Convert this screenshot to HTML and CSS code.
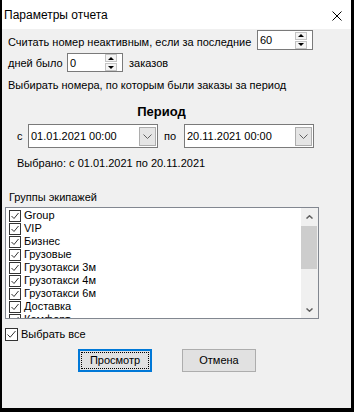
FILE: index.html
```html
<!DOCTYPE html>
<html lang="ru">
<head>
<meta charset="utf-8">
<title>Параметры отчета</title>
<link rel="stylesheet" href="styles.css">
</head>
<body>
<div class="window">
  <div class="titlebar">
    <span class="title">Параметры отчета</span>
    <svg class="close" viewBox="0 0 10 10"><path d="M0.5 0.5 L9.5 9.5 M9.5 0.5 L0.5 9.5" stroke="#000" stroke-width="1" fill="none"/></svg>
  </div>

  <div class="row r1">
    <span class="lbl w1">Считать номер неактивным, если за последние</span>
    <div class="spin"><span class="val">60</span><div class="arrows"><div class="ab"><i class="tri-up"></i></div><div class="ab"><i class="tri-down"></i></div></div></div>
  </div>
  <div class="row r2">
    <span class="lbl w2">дней было</span>
    <div class="spin"><span class="val">0</span><div class="arrows"><div class="ab"><i class="tri-up"></i></div><div class="ab"><i class="tri-down"></i></div></div></div>
    <span class="lbl after">заказов</span>
  </div>
  <div class="line r3">Выбирать номера, по которым были заказы за период</div>

  <div class="period">Период</div>

  <div class="row dates">
    <span class="lbl wc">с</span>
    <div class="date"><span>01.01.2021 00:00</span><div class="dd"><svg viewBox="0 0 9 5" class="chev"><path d="M0.5 0.5 L4.5 4.5 L8.5 0.5" stroke="#606060" fill="none"/></svg></div></div>
    <span class="lbl wpo">по</span>
    <div class="date"><span>20.11.2021 00:00</span><div class="dd"><svg viewBox="0 0 9 5" class="chev"><path d="M0.5 0.5 L4.5 4.5 L8.5 0.5" stroke="#606060" fill="none"/></svg></div></div>
  </div>
  <div class="line chosen">Выбрано: с 01.01.2021 по 20.11.2021</div>

  <div class="line groups">Группы экипажей</div>
  <div class="list">
    <div class="items">
      <div class="item"><svg class="cb" viewBox="0 0 12 12"><rect x="0.5" y="0.5" width="11" height="11" fill="#fff" stroke="#333"/><path d="M2.5 6 L5 8.5 L9.5 3" fill="none" stroke="#333"/></svg><span>Group</span></div>
      <div class="item"><svg class="cb" viewBox="0 0 12 12"><rect x="0.5" y="0.5" width="11" height="11" fill="#fff" stroke="#333"/><path d="M2.5 6 L5 8.5 L9.5 3" fill="none" stroke="#333"/></svg><span>VIP</span></div>
      <div class="item"><svg class="cb" viewBox="0 0 12 12"><rect x="0.5" y="0.5" width="11" height="11" fill="#fff" stroke="#333"/><path d="M2.5 6 L5 8.5 L9.5 3" fill="none" stroke="#333"/></svg><span>Бизнес</span></div>
      <div class="item"><svg class="cb" viewBox="0 0 12 12"><rect x="0.5" y="0.5" width="11" height="11" fill="#fff" stroke="#333"/><path d="M2.5 6 L5 8.5 L9.5 3" fill="none" stroke="#333"/></svg><span>Грузовые</span></div>
      <div class="item"><svg class="cb" viewBox="0 0 12 12"><rect x="0.5" y="0.5" width="11" height="11" fill="#fff" stroke="#333"/><path d="M2.5 6 L5 8.5 L9.5 3" fill="none" stroke="#333"/></svg><span>Грузотакси 3м</span></div>
      <div class="item"><svg class="cb" viewBox="0 0 12 12"><rect x="0.5" y="0.5" width="11" height="11" fill="#fff" stroke="#333"/><path d="M2.5 6 L5 8.5 L9.5 3" fill="none" stroke="#333"/></svg><span>Грузотакси 4м</span></div>
      <div class="item"><svg class="cb" viewBox="0 0 12 12"><rect x="0.5" y="0.5" width="11" height="11" fill="#fff" stroke="#333"/><path d="M2.5 6 L5 8.5 L9.5 3" fill="none" stroke="#333"/></svg><span>Грузотакси 6м</span></div>
      <div class="item"><svg class="cb" viewBox="0 0 12 12"><rect x="0.5" y="0.5" width="11" height="11" fill="#fff" stroke="#333"/><path d="M2.5 6 L5 8.5 L9.5 3" fill="none" stroke="#333"/></svg><span>Доставка</span></div>
      <div class="item"><svg class="cb" viewBox="0 0 12 12"><rect x="0.5" y="0.5" width="11" height="11" fill="#fff" stroke="#333"/><path d="M2.5 6 L5 8.5 L9.5 3" fill="none" stroke="#333"/></svg><span>Комфорт</span></div>
    </div>
    <div class="scroll">
      <div class="sbtn"><svg viewBox="0 0 7 4" class="sarrow"><path d="M0.5 3.5 L3.5 0.8 L6.5 3.5" stroke="#606060" stroke-width="1.5" fill="none"/></svg></div>
      <div class="thumb"></div>
      <div class="track"></div>
      <div class="sbtn"><svg viewBox="0 0 7 4" class="sarrow"><path d="M0.5 0.5 L3.5 3.2 L6.5 0.5" stroke="#606060" stroke-width="1.5" fill="none"/></svg></div>
    </div>
  </div>

  <div class="row selall">
    <svg class="cb big" viewBox="0 0 13 13"><rect x="0.5" y="0.5" width="12" height="12" fill="#fff" stroke="#333"/><path d="M2.5 6.5 L5.2 9.2 L10.5 3" fill="none" stroke="#333"/></svg>
    <span class="lbl sel-txt">Выбрать все</span>
  </div>

  <div class="row buttons">
    <div class="btn primary"><div class="focus">Просмотр</div></div>
    <div class="btn">Отмена</div>
  </div>
</div>
</body>
</html>
```

FILE: styles.css
```css
* { box-sizing: border-box; }
html, body { margin: 0; padding: 0; }
body {
  background: #000;
  font-family: "Liberation Sans", Arial, sans-serif;
  font-size: 11px;
  color: #000;
  width: 354px;
  height: 412px;
  overflow: hidden;
}
.window {
  margin-left: 2px;
  width: 349px;
  height: 408px;
  background: #f0f0f0;
  display: flex;
  flex-direction: column;
}
.titlebar {
  height: 29px;
  flex: none;
  background: #fff;
  display: flex;
  align-items: center;
  justify-content: space-between;
  padding: 0 9px 0 2px;
  font-size: 12px;
}
.close { width: 10px; height: 10px; margin-top: 2px; }

.row { display: flex; align-items: center; flex: none; }
.lbl { white-space: nowrap; line-height: 13px; }
.line { line-height: 13px; white-space: nowrap; flex: none; }

.r1 { margin: 1px 0 0 6px; height: 20px; }
.w1 { width: 249px; padding-top: 4px; }
.r2 { margin: 3px 0 0 6px; height: 19px; }
.r2 .spin { height: 19px; }
.w2 { width: 59px; padding-top: 2px; }
.after { margin-left: 6px; padding-top: 2px; }
.r3 { margin: 7px 0 0 6px; }

.spin {
  width: 56px;
  height: 20px;
  border: 1px solid #7a7a7a;
  background: #fff;
  display: flex;
  align-items: center;
  padding-left: 2px;
}
.val { flex: 1; }
.arrows {
  width: 12px;
  margin-right: 5px;
  display: flex;
  flex-direction: column;
  gap: 1px;
}
.ab {
  height: 8px;
  border: 1px solid #c4c4c4;
  background: #f4f4f4;
  display: flex;
  align-items: center;
  justify-content: center;
}
.tri-up, .tri-down { display: block; width: 0; height: 0; border-left: 3px solid transparent; border-right: 3px solid transparent; }
.tri-up { border-bottom: 3px solid #000; }
.tri-down { border-top: 3px solid #000; }

.period {
  margin-top: 12px;
  width: 319px;
  text-align: center;
  font-weight: bold;
  font-size: 13px;
  line-height: 16px;
  flex: none;
}

.dates { margin: 4px 0 0 15px; height: 24px; }
.wc { width: 11px; }
.wpo { width: 20px; margin-left: 6px; }
.date {
  width: 130px;
  height: 24px;
  border: 1px solid #7a7a7a;
  background: #fff;
  display: flex;
  align-items: center;
  justify-content: space-between;
  padding: 0 1px 0 2px;
}
.dd {
  width: 17px;
  height: 19px;
  border: 1px solid #adadad;
  background: #e5e5e5;
  display: flex;
  align-items: center;
  justify-content: center;
}
.chev { width: 9px; height: 5px; }

.chosen { margin: 9px 0 0 15px; }
.groups { margin: 21px 0 0 7px; }

.list {
  margin: 3px 0 0 3px;
  width: 314px;
  height: 112px;
  border: 1px solid #828790;
  background: #fff;
  display: flex;
  flex: none;
}
.items { flex: 1; padding-top: 1px; overflow: hidden; }
.item {
  height: 13px;
  display: flex;
  align-items: center;
  padding-left: 3px;
  white-space: nowrap;
}
.cb { width: 12px; height: 12px; flex: none; }
.item span { margin-left: 3px; line-height: 13px; }
.scroll {
  width: 17px;
  background: #f0f0f0;
  display: flex;
  flex-direction: column;
}
.sbtn { height: 17px; display: flex; align-items: center; justify-content: center; flex: none; }
.sarrow { width: 7px; height: 4px; }
.thumb { height: 43px; margin: 1px 1px 0 0; background: #cdcdcd; flex: none; }
.track { flex: 1; }

.selall { margin: 8px 0 0 3px; height: 14px; }
.cb.big { width: 13px; height: 13px; }
.sel-txt { margin-left: 3px; }

.buttons { margin: 8px 0 0 76px; gap: 30px; }
.btn {
  width: 74px;
  height: 23px;
  background: #e1e1e1;
  border: 1px solid #adadad;
  display: flex;
  align-items: center;
  justify-content: center;
  line-height: 13px;
}
.btn.primary { border: 2px solid #0078d7; padding: 1px; }
.focus {
  width: 100%;
  height: 100%;
  border: 1px dotted #000;
  display: flex;
  align-items: center;
  justify-content: center;
}
```
